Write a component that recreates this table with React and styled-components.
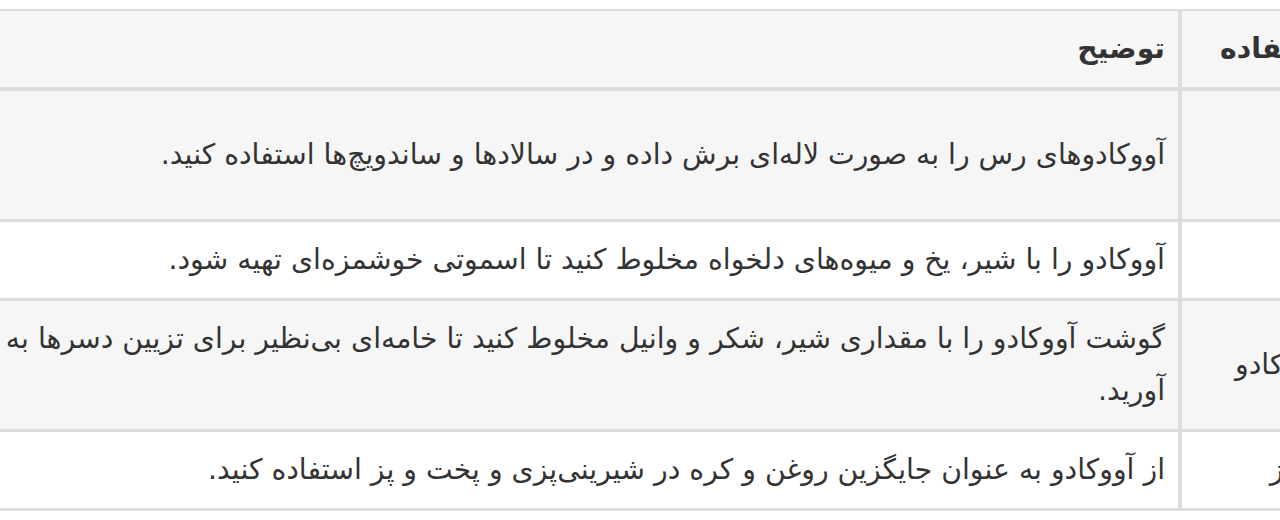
import React from "react";
import styled, { createGlobalStyle } from "styled-components";

const GlobalStyle = createGlobalStyle`
  body {
    margin: 0;
    background: #ffffff;
    font-family: "DejaVu Sans", "Noto Sans", sans-serif;
    color: #333333;
  }
`;

const Viewport = styled.div`
  width: 1280px;
  height: 520px;
  overflow: hidden;
  direction: rtl;
  padding-top: 9px;
  box-sizing: border-box;
`;

const Table = styled.table`
  table-layout: fixed;
  width: 1819px;
  margin-right: -147px;
  border-collapse: separate;
  border-spacing: 0;
  border-top: 2px solid #dddddd;
  font-size: 28.3px;
  line-height: 52px;
`;

const Row = styled.tr`
  background: ${(p) => (p.$striped ? "#f6f6f6" : "#ffffff")};
`;

const HeadCell = styled.th`
  padding: 12px 13px;
  text-align: right;
  vertical-align: middle;
  font-weight: bold;
  background: #f6f6f6;
  border-left: 4px solid #dddddd;
  border-bottom: 4px solid #dddddd;
`;

const Cell = styled.td`
  padding: 12px 13px;
  text-align: right;
  vertical-align: middle;
  border-left: 4px solid #dddddd;
  border-bottom: 3px solid #dddddd;
`;

const rows = [
  {
    use: "سالاد",
    desc: "آووکادوهای رس را به صورت لاله‌ای برش داده و در سالادها و ساندویچ‌ها استفاده کنید.",
    note: "با کمی آبلیمو سرو کنید.",
  },
  {
    use: "اسموتی",
    desc: "آووکادو را با شیر، یخ و میوه‌های دلخواه مخلوط کنید تا اسموتی خوشمزه‌ای تهیه شود.",
    note: "صبحانه",
  },
  {
    use: "خامه‌ای آووکادو",
    desc: "گوشت آووکادو را با مقداری شیر، شکر و وانیل مخلوط کنید تا خامه‌ای بی‌نظیر برای تزیین دسرها به دست آورید.",
    note: "دسر",
  },
  {
    use: "در پخت و پز",
    desc: "از آووکادو به عنوان جایگزین روغن و کره در شیرینی‌پزی و پخت و پز استفاده کنید.",
    note: "کیک",
  },
];

export default function App() {
  return (
    <>
      <GlobalStyle />
      <Viewport>
        <Table>
          <colgroup>
            <col style={{ width: 249 }} />
            <col style={{ width: 1270 }} />
            <col style={{ width: 300 }} />
          </colgroup>
          <thead>
            <tr>
              <HeadCell>روش استفاده</HeadCell>
              <HeadCell>توضیح</HeadCell>
              <HeadCell>نکته</HeadCell>
            </tr>
          </thead>
          <tbody>
            {rows.map((r, i) => (
              <Row key={i} $striped={i % 2 === 0}>
                <Cell>{r.use}</Cell>
                <Cell>{r.desc}</Cell>
                <Cell>{r.note}</Cell>
              </Row>
            ))}
          </tbody>
        </Table>
      </Viewport>
    </>
  );
}
